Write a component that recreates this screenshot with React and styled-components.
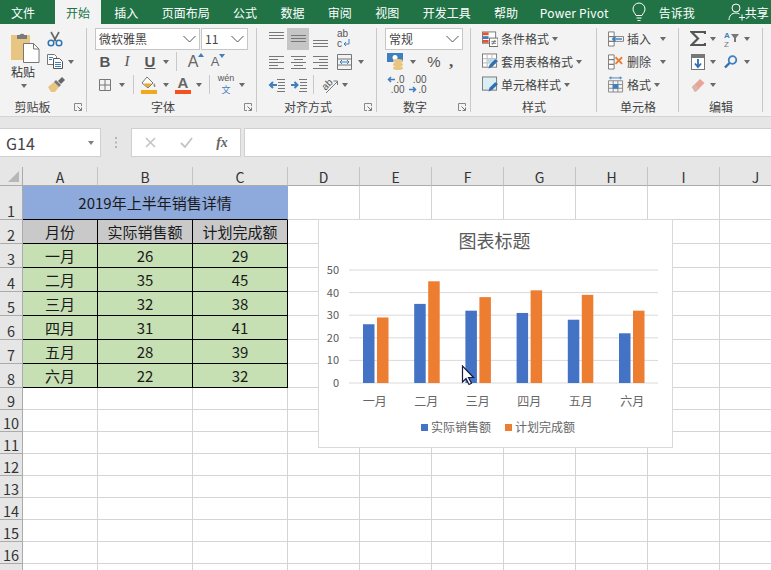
import React from 'react'
import styled, { createGlobalStyle } from 'styled-components'

const GlobalStyle = createGlobalStyle`
  html, body { margin: 0; padding: 0; background: #fff; }
  body { font-family: "Noto Sans CJK SC", "Noto Sans", sans-serif; }
`

const App_ = styled.div`
  position: relative;
  width: 771px;
  height: 570px;
  overflow: hidden;
  font-family: "Noto Sans CJK SC", "Noto Sans", sans-serif;
`

/* ---------- title tabs ---------- */
const TabBar = styled.div`
  display: flex;
  align-items: stretch;
  height: 24px;
  background: #217346;
  color: #fff;
  font-size: 12px;
`
const Tab = styled.div`
  display: flex;
  align-items: center;
  padding: 0 11px;
  margin: 0 0.7px;
  white-space: nowrap;
  background: ${p => (p.$active ? '#f3f3f3' : 'transparent')};
  color: ${p => (p.$active ? '#217346' : '#fff')};
  &:first-child { margin: 0 8.3px 0 0; }
  &:nth-child(2) { margin-right: 1.6px; }
`
const TabExtra = styled.div`
  display: flex;
  align-items: center;
  white-space: nowrap;
  flex: none;
  margin-left: ${p => p.$ml}px;
  letter-spacing: ${p => p.$ls || 0}px;
`

/* ---------- ribbon ---------- */
const Ribbon = styled.div`
  display: flex;
  height: 93px;
  box-sizing: border-box;
  padding-top: 3px;
  background: #f3f3f3;
  border-bottom: 1px solid #d4d4d4;
  color: #444;
  font-size: 12px;
`
const Group = styled.div`
  position: relative;
  width: ${p => p.$w}px;
  display: flex;
  flex-direction: column;
  &::after {
    content: '';
    position: absolute;
    top: 1px;
    bottom: 4px;
    right: 0;
    width: 1px;
    background: #c8c8c8;
  }
`
const Body = styled.div`
  height: 69px;
  padding-left: ${p => p.$pad || 0}px;
  display: flex;
`
const Rows = styled.div`
  display: flex;
  flex-direction: column;
`
const Row = styled.div`
  height: 23px;
  display: flex;
  align-items: center;
`
const Slot = styled.div`
  width: ${p => p.$w}px;
  height: 22px;
  flex: none;
  margin-left: ${p => p.$ml || 0}px;
  display: flex;
  align-items: center;
  justify-content: center;
  background: ${p => (p.$on ? '#c6c6c6' : 'transparent')};
`
const GroupLabel = styled.div`
  height: 21px;
  line-height: 22px;
  text-align: center;
  padding-right: ${p => p.$right || 0}px;
  color: #444;
  white-space: nowrap;
`
const Launcher = styled.svg`
  position: absolute;
  right: 5px;
  bottom: 5px;
`
const CaretBox = styled.div`
  width: ${p => p.$w || 10}px;
  height: 22px;
  flex: none;
  display: flex;
  align-items: center;
  justify-content: center;
  margin-left: ${p => p.$ml || 0}px;
  &::before {
    content: '';
    border-left: 3.5px solid transparent;
    border-right: 3.5px solid transparent;
    border-top: 4px solid #6a6a6a;
  }
`
const Sep = styled.div`
  width: 1px;
  height: 19px;
  flex: none;
  margin: 0 ${p => p.$m}px;
  background: #c8c8c8;
`
const Select = styled.div`
  width: ${p => p.$w}px;
  height: 22px;
  box-sizing: border-box;
  margin-right: 1px;
  flex: none;
  display: flex;
  align-items: center;
  justify-content: space-between;
  padding: 0 3px;
  background: #fff;
  border: 1px solid #c6c6c6;
  color: #444;
`
const PasteCol = styled.div`
  width: 47px;
  padding: 5px 0 0 11px;
  box-sizing: border-box;
  display: flex;
  flex-direction: column;
  align-items: flex-start;
  color: #333;
`
const PasteText = styled.div`
  line-height: 17px;
`
const PasteCaret = styled(CaretBox)`
  height: 8px;
  margin: 2px 0 0 8px;
`
const Fmt = styled.span`
  font-family: ${p => (p.$serif ? '"Liberation Serif"' : '"Liberation Sans"')}, sans-serif;
  font-size: 15px;
  font-weight: ${p => (p.$italic ? 400 : 700)};
  font-style: ${p => (p.$italic ? 'italic' : 'normal')};
  color: #555;
  text-decoration: ${p => (p.$under ? 'underline' : 'none')};
`
const GrowA = styled.span`
  position: relative;
  font-family: "Liberation Sans", sans-serif;
  font-size: ${p => p.$size}px;
  color: #666;
  &::after {
    content: '';
    position: absolute;
    top: 0;
    right: -6px;
    border-left: 3px solid transparent;
    border-right: 3px solid transparent;
    ${p => (p.$down ? 'border-top: 4px solid #3f7fbf;' : 'border-bottom: 4px solid #3f7fbf;')}
  }
`
const ColorA = styled.div`
  width: 17px;
  display: flex;
  flex-direction: column;
  align-items: center;
  font-family: "Liberation Sans", sans-serif;
  font-size: 15px;
  font-weight: 700;
  line-height: 14px;
  color: #666;
  &::after {
    content: '';
    width: 16px;
    height: 4px;
    background: #f4511e;
  }
`
const Wen = styled.div`
  display: flex;
  flex-direction: column;
  align-items: center;
  font-family: "Liberation Sans", sans-serif;
  font-size: 9px;
  line-height: 9px;
  color: #555;
  b {
    display: block;
    font-family: "Noto Sans CJK SC", sans-serif;
    font-weight: 400;
    font-size: 9px;
    line-height: 13px;
    color: #3f7fbf;
  }
`
const Percent = styled.span`
  font-family: "Liberation Sans", sans-serif;
  font-size: 15px;
  color: #555;
`
const Comma = styled.span`
  font-family: "Liberation Serif", serif;
  font-size: 17px;
  font-weight: 700;
  color: #555;
  line-height: 14px;
`
const Decimal = styled.div`
  display: flex;
  flex-direction: column;
  align-items: flex-end;
  font-family: "Liberation Sans", sans-serif;
  font-size: 10px;
  line-height: 10px;
  color: #555;
  span {
    display: flex;
    align-items: center;
    gap: 1px;
  }
`
const StyleText = styled.span`
  margin-left: 3px;
  white-space: nowrap;
`

/* ---------- formula bar ---------- */
const FormulaBar = styled.div`
  height: 50px;
  box-sizing: border-box;
  padding-top: 11px;
  display: flex;
  align-items: flex-start;
  background: #e6e6e6;
`
const NameBox = styled.div`
  width: 101px;
  height: 29px;
  box-sizing: border-box;
  display: flex;
  align-items: center;
  justify-content: space-between;
  padding: 0 6px;
  background: #fff;
  border: 1px solid #d0d0d0;
  border-left: 0;
  font-size: 16px;
  color: #444;
  &::after {
    content: '';
    border-left: 3.5px solid transparent;
    border-right: 3.5px solid transparent;
    border-top: 4px solid #808080;
  }
`
const Dots = styled.div`
  width: 30px;
  height: 29px;
  display: flex;
  align-items: center;
  justify-content: center;
`
const FxBox = styled.div`
  width: 110px;
  height: 29px;
  box-sizing: border-box;
  display: flex;
  align-items: center;
  background: #fff;
  border: 1px solid #d0d0d0;
`
const FxSlot = styled.div`
  width: 36px;
  display: flex;
  justify-content: center;
`
const FxText = styled.span`
  font-family: "Liberation Serif", serif;
  font-style: italic;
  font-weight: 700;
  font-size: 14px;
  color: #666;
`
const FormulaInput = styled.div`
  flex: 1;
  height: 29px;
  box-sizing: border-box;
  margin-left: 3px;
  background: #fff;
  border: 1px solid #d0d0d0;
  border-right: 0;
`

/* ---------- sheet ---------- */
const Sheet = styled.div`
  display: flex;
  flex-direction: column;
  font-size: 15px;
  color: #1a1a1a;
`
const SheetRow = styled.div`
  display: flex;
  height: ${p => p.$h}px;
  flex: none;
`
const Corner = styled.div`
  position: relative;
  width: 23px;
  flex: none;
  box-sizing: border-box;
  background: #e6e6e6;
  border-right: 1px solid #ababab;
  border-bottom: 1px solid #ababab;
  &::after {
    content: '';
    position: absolute;
    right: 3px;
    bottom: 3px;
    border-left: 11px solid transparent;
    border-bottom: 11px solid #b7b7b7;
  }
`
const ColHead = styled.div`
  width: ${p => p.$w}px;
  flex: none;
  box-sizing: border-box;
  display: flex;
  align-items: center;
  justify-content: center;
  padding-top: 2px;
  background: #e6e6e6;
  border-right: 1px solid #c4c4c4;
  border-bottom: 1px solid #ababab;
  color: #333;
  font-size: 14px;
`
const RowHead = styled.div`
  width: 23px;
  flex: none;
  box-sizing: border-box;
  display: flex;
  align-items: flex-end;
  justify-content: center;
  line-height: 16px;
  background: #e6e6e6;
  border-right: 1px solid #ababab;
  border-bottom: 1px solid #ababab;
  color: #333;
  font-size: 14.5px;
`
const fills = { title: '#8ea9db', head: '#c9c9c9', data: '#c6e0b4' }
const Cell = styled.div`
  width: ${p => p.$w}px;
  flex: none;
  box-sizing: border-box;
  display: flex;
  align-items: center;
  justify-content: center;
  background: ${p => fills[p.$fill] || '#fff'};
  border-right: 1px solid ${p => (p.$fill === 'title' ? '#8ea9db' : p.$fill ? '#000' : '#d4d4d4')};
  border-bottom: 1px solid ${p => (p.$fill ? '#000' : '#d4d4d4')};
  white-space: nowrap;
`

/* ---------- chart ---------- */
const Chart = styled.div`
  position: absolute;
  left: 318px;
  top: 219px;
  width: 355px;
  height: 229px;
  box-sizing: border-box;
  background: #fff;
  border: 1px solid #d9d9d9;
  display: flex;
  flex-direction: column;
  color: #595959;
`
const ChartTitle = styled.div`
  font-size: 18px;
  line-height: 24px;
  margin-top: 8px;
  text-align: center;
  padding-right: 2px;
`
const Plot = styled.svg`
  display: block;
  margin-top: 6px;
  flex: none;
`
const Cats = styled.div`
  display: flex;
  margin: 1px 0 0 30px;
  font-size: 12px;
  line-height: 16px;
`
const Cat = styled.div`
  width: 51.5px;
  text-align: center;
  color: #666;
`
const Legend = styled.div`
  display: flex;
  margin: 10px 0 0 102px;
  gap: 14px;
  font-size: 12px;
  line-height: 16px;
  color: #666;
`
const LegendItem = styled.div`
  display: flex;
  align-items: center;
  gap: 3px;
  &::before {
    content: '';
    width: 7px;
    height: 7px;
    background: ${p => p.$color};
  }
`
const Pointer = styled.svg`
  position: absolute;
  left: 461px;
  top: 365px;
`

/* ---------- icons ---------- */
const BLUE = '#3f7fbf'

const PasteIcon = () => (
  <svg width="29" height="31" viewBox="0 0 29 31">
    <rect x="0" y="3" width="19" height="25" fill="#e8c581" />
    <path d="M6 3h2.5a3 3 0 0 1 5 0H16v4H6z" fill="#7a7a7a" />
    <path d="M12.5 11.5h10l5.500 5.500v13.500h-15.500z" fill="#fff" stroke="#777" />
    <path d="M22.5 11.5v5.500H28" fill="none" stroke="#777" />
  </svg>
)
const CutIcon = () => (
  <svg width="16" height="16" viewBox="0 0 16 16">
    <path d="M4 1l5 9M12 1L7 10" stroke="#666" strokeWidth="1.6" fill="none" />
    <circle cx="4" cy="12" r="2.8" fill="none" stroke="#2f75b5" strokeWidth="1.5" />
    <circle cx="12" cy="12" r="2.8" fill="none" stroke="#2f75b5" strokeWidth="1.5" />
  </svg>
)
const CopyIcon = () => (
  <svg width="16" height="15" viewBox="0 0 16 15">
    <path d="M.5.5h7l2 2v8h-9z" fill="#fff" stroke="#777" />
    <path d="M6.5 4.5h6l3 3v7h-9z" fill="#fff" stroke="#555" />
    <path d="M2 3.5h4M2 5.5h3M8 8.5h6M8 10.5h6M8 12.5h6" stroke="#3f7fbf" />
  </svg>
)
const BrushIcon = () => (
  <svg width="18" height="15" viewBox="0 0 18 15">
    <path d="M1 10l6-5 5 5-4 5H4z" fill="#e8c581" />
    <path d="M7 5l5 5 2-2-5-5z" fill="#777" />
    <path d="M11 4l4-4 3 3-4 4z" fill="#666" />
  </svg>
)
const GridIcon = () => (
  <svg width="14" height="14" viewBox="0 0 14 14">
    <path d="M1.5 1.5h11v11h-11zM7 1.5v11M1.5 7h11" fill="none" stroke="#777" />
  </svg>
)
const FillIcon = () => (
  <svg width="18" height="18" viewBox="0 0 18 18">
    <path d="M7 1l6 6-5 5-6-5z" fill="#fff" stroke="#777" />
    <path d="M3.5 7.5H12L8 11.5z" fill="#f0a81c" />
    <path d="M14 7c1 1.5 2 3 1 4-1 .5-2-1-1-4z" fill="#888" />
    <rect x="1" y="14" width="16" height="4" fill="#f0a81c" />
  </svg>
)
const Lines = ({ w = 15, h = 16, rows }) => (
  <svg width={w} height={h} viewBox={`0 0 ${w} ${h}`}>
    {rows.map(([x1, x2, y], i) => (
      <path key={i} d={`M${x1} ${y + 0.5}H${x2}`} stroke="#777" />
    ))}
  </svg>
)
const full = [0, 15]
const alignTop = [[...full, 1], [...full, 4], [...full, 7]]
const alignMid = [[...full, 4], [...full, 7], [...full, 10]]
const alignBot = [[...full, 9], [...full, 12], [...full, 15]]
const alignLeft = [[0, 15, 2], [0, 9, 5], [0, 15, 8], [0, 9, 11], [0, 15, 14]]
const alignCenter = [[0, 15, 2], [3, 12, 5], [0, 15, 8], [3, 12, 11], [0, 15, 14]]
const alignRight = [[0, 15, 2], [6, 15, 5], [0, 15, 8], [6, 15, 11], [0, 15, 14]]

const WrapIcon = () => (
  <svg width="15" height="19" viewBox="0 0 15 19">
    <text x="0" y="8" fontSize="10" fontFamily="Liberation Sans" fill="#555">ab</text>
    <text x="0" y="18" fontSize="10" fontFamily="Liberation Sans" fill="#555">c</text>
    <path d="M12 10v5H7M9 13l-2 2 2 2" fill="none" stroke={BLUE} />
  </svg>
)
const MergeIcon = () => (
  <svg width="15" height="16" viewBox="0 0 15 16">
    <path d="M.5.5h14v15H.5zM.5 5h14M.5 11h14" fill="none" stroke="#777" />
    <path d="M3 8h9M5 6L3 8l2 2M10 6l2 2-2 2" fill="none" stroke={BLUE} />
  </svg>
)
const IndentIcon = ({ flip }) => (
  <svg width="17" height="14" viewBox="0 0 17 14">
    {flip ? (
      <path d="M1 7h6M4.5 4l3 3-3 3" fill="none" stroke={BLUE} strokeWidth="2" />
    ) : (
      <path d="M9 7H2M5 4L2 7l3 3" fill="none" stroke={BLUE} strokeWidth="2" />
    )}
    <path d="M9 1.5h8M10 4.5h7M10 7.5h7M10 10.5h7M9 13.5h8" stroke="#777" />
  </svg>
)
const RotateIcon = () => (
  <svg width="20" height="20" viewBox="0 0 20 20">
    <text x="3" y="13" fontSize="10" fontFamily="Liberation Sans" fill="#555" transform="rotate(-45 8 10)">ab</text>
    <path d="M7 18L18 7M14.5 6h4v4" fill="none" stroke="#777" />
  </svg>
)
const MoneyIcon = () => (
  <svg width="18" height="17" viewBox="0 0 18 17">
    <rect x="0" y="0" width="16" height="9" fill="#3f7fbf" />
    <circle cx="8" cy="4.5" r="2.5" fill="#fff" />
    <ellipse cx="11" cy="8" rx="5" ry="2" fill="#e8c581" />
    <ellipse cx="11" cy="11.5" rx="5" ry="2" fill="#e8c581" />
    <ellipse cx="11" cy="15" rx="5" ry="2" fill="#e8c581" />
  </svg>
)
const ArrowLeft = () => (
  <svg width="8" height="7" viewBox="0 0 8 7">
    <path d="M8 3.5H1.500M4 1L1.500 3.500 4 6" fill="none" stroke={BLUE} strokeWidth="1.500" />
  </svg>
)
const ArrowRight = () => (
  <svg width="8" height="7" viewBox="0 0 8 7">
    <path d="M0 3.500h6.500M4 1l2.500 2.500L4 6" fill="none" stroke={BLUE} strokeWidth="1.500" />
  </svg>
)
const CondIcon = () => (
  <svg width="17" height="16" viewBox="0 0 17 16">
    <rect x=".5" y=".5" width="14" height="12" fill="#fff" stroke="#777" />
    <rect x="1" y="1" width="6" height="3" fill="#e8502a" />
    <rect x="1" y="5" width="6" height="3" fill="#3f7fbf" />
    <rect x="1" y="9" width="6" height="3" fill="#e8502a" />
    <rect x="8" y="7" width="9" height="9" fill="#fff" stroke="#666" />
    <path d="M10 10.5h5M10 12.5h5M14 9l-3 5" fill="none" stroke="#555" strokeWidth=".8" />
  </svg>
)
const TableIcon = ({ plain }) => (
  <svg width="17" height="17" viewBox="0 0 17 17">
    <rect x=".5" y=".5" width="15" height="14" fill={plain ? '#dbeef3' : '#fff'} stroke="#777" />
    {!plain && <path d="M5.5 1v13M10.5 1v13M1 5.5h14M1 10h14" stroke="#b5b5b5" />}
    {!plain && <path d="M5.5 5.5h10v5h-10z" fill="#bcd9e2" />}
    <path d="M7 16l1-4 6-6 3 2-6 6z" fill="#2f6fb0" />
  </svg>
)
const InsertIcon = () => (
  <svg width="17" height="17" viewBox="0 0 17 17">
    <path d="M.5 1.5h6v5h-6zM.5 6.5h6v5h-6zM.5 11.5h6v5h-6zM6.5 6.5h10v5h-10z" fill="#fff" stroke="#777" />
    <path d="M15 9H5M8 6.5L5 9l3 2.5" fill="none" stroke={BLUE} strokeWidth="1.6" />
  </svg>
)
const DeleteIcon = () => (
  <svg width="17" height="17" viewBox="0 0 17 17">
    <path d="M.5 1.5h6v5h-6zM.5 6.5h6v5h-6zM.5 11.5h6v5h-6z" fill="#fff" stroke="#777" />
    <path d="M8 4l7 7M15 4l-7 7" stroke="#ed7d31" strokeWidth="2" />
  </svg>
)
const FormatIcon = () => (
  <svg width="17" height="17" viewBox="0 0 17 17">
    <path d="M.5 4.5h15v12H.5zM5.5 4.5v12M10.5 4.5v12M.5 8.5h15M.5 12.5h15" fill="none" stroke="#888" />
    <rect x="5" y="8" width="6" height="5" fill="#3f7fbf" />
    <path d="M1 1.5h14M3 0v3M13 0v3" stroke={BLUE} />
  </svg>
)
const SumIcon = () => (
  <svg width="16" height="15" viewBox="0 0 16 15">
    <path d="M15 3V1H1.5L8 7.5 1.5 14H15v-2" fill="none" stroke="#555" strokeWidth="2.2" />
  </svg>
)
const SortIcon = () => (
  <svg width="15" height="20" viewBox="0 0 15 20">
    <text x="0" y="9" fontSize="8" fontWeight="700" fontFamily="Liberation Sans" fill={BLUE}>A</text>
    <text x="0" y="18" fontSize="8" fontFamily="Liberation Sans" fill="#777">Z</text>
    <path d="M7 5h8l-3 4v4h-2V9z" fill="#777" />
  </svg>
)
const FillDownIcon = () => (
  <svg width="14" height="16" viewBox="0 0 14 16">
    <rect x=".5" y=".5" width="13" height="15" fill="#fff" stroke="#777" />
    <rect x="1" y="1" width="12" height="3" fill="#777" />
    <path d="M7 5v8M4 9.5L7 13l3-3.5" fill="none" stroke="#2f6fb0" strokeWidth="1.8" />
  </svg>
)
const FindIcon = () => (
  <svg width="14" height="14" viewBox="0 0 14 14">
    <circle cx="8.5" cy="5" r="3.8" fill="none" stroke={BLUE} strokeWidth="1.8" />
    <path d="M5.5 8L1 12.5" stroke="#2f6fb0" strokeWidth="2.4" />
  </svg>
)
const EraserIcon = () => (
  <svg width="14" height="14" viewBox="0 0 14 14">
    <path d="M1 9l8-8 4.5 4L5 13.5H3.5z" fill="#eba394" />
    <path d="M1 9l3-3 4.5 4.5L5 13.5H3.5z" fill="#d8b7a8" />
  </svg>
)
const BulbIcon = () => (
  <svg width="14" height="20" viewBox="0 0 14 20">
    <path d="M4 13.5C3 11 1 10 1 7a6 6 0 0 1 12 0c0 3-2 4-3 6.5zM4.5 16h5M5.5 18.5h3" fill="none" stroke="#fff" />
  </svg>
)
const UserIcon = () => (
  <svg width="17" height="18" viewBox="0 0 17 18">
    <circle cx="8" cy="5" r="4" fill="none" stroke="#fff" />
    <path d="M1 17c0-4 2.5-7 7-7 1.500 0 2.500.3 3.500 1M11 14.500h6M14 11.500v6" fill="none" stroke="#fff" />
  </svg>
)
const Chevron = () => (
  <svg width="13" height="8" viewBox="0 0 13 8">
    <path d="M.5 1l6 6 6-6" fill="none" stroke="#555" />
  </svg>
)
const LauncherIcon = () => (
  <Launcher width="8" height="8" viewBox="0 0 8 8">
    <path d="M7.5 3V.5H.5v7H3" fill="none" stroke="#888" />
    <path d="M3.5 3.5L7 7M7.500 4.500v3h-3" fill="none" stroke="#777" />
  </Launcher>
)

/* ---------- data ---------- */
const months = [
  ['一月', 26, 29],
  ['二月', 35, 45],
  ['三月', 32, 38],
  ['四月', 31, 41],
  ['五月', 28, 39],
  ['六月', 22, 32],
]
const colWidths = [75, 95, 95, 72, 72, 72, 72, 72, 72, 72]
const colNames = 'ABCDEFGHIJ'.split('')
const rowHeight = r => (r === 1 ? 34 : r <= 8 ? 24 : 22)
const tabs = ['文件', '开始', '插入', '页面布局', '公式', '数据', '审阅', '视图', '开发工具', '帮助']

const rowCells = r => {
  if (r === 1) return [{ w: 265, fill: 'title', text: '2019年上半年销售详情' }, ...colWidths.slice(3).map(w => ({ w }))]
  if (r === 2) {
    return [
      { w: 75, fill: 'head', text: '月份' },
      { w: 95, fill: 'head', text: '实际销售额' },
      { w: 95, fill: 'head', text: '计划完成额' },
      ...colWidths.slice(3).map(w => ({ w })),
    ]
  }
  if (r <= 8) {
    const m = months[r - 3]
    return [...m.map((text, i) => ({ w: colWidths[i], fill: 'data', text })), ...colWidths.slice(3).map(w => ({ w }))]
  }
  return colWidths.map(w => ({ w }))
}

const PLOT_X = 30
const PLOT_W = 309
const ZERO_Y = 125
const UNIT = 2.26

const BarChart = () => (
  <Plot width="353" height="134" viewBox="0 0 353 134">
    {[0, 10, 20, 30, 40, 50].map(v => {
      const y = ZERO_Y - v * UNIT
      return (
        <g key={v}>
          <path d={`M${PLOT_X} ${y}H${PLOT_X + PLOT_W}`} stroke="#d9d9d9" strokeWidth="1" />
          <text x="20" y={y + 4} textAnchor="end" fontSize="11" fontFamily="Noto Sans CJK SC" fill="#595959">{v}</text>
        </g>
      )
    })}
    {months.map(([name, a, b], i) => {
      const x = PLOT_X + 14 + i * 51.2
      return (
        <g key={name}>
          <rect x={x} y={ZERO_Y - a * UNIT} width="11.5" height={a * UNIT} fill="#4472c4" />
          <rect x={x + 14} y={ZERO_Y - b * UNIT} width="11.5" height={b * UNIT} fill="#ed7d31" />
        </g>
      )
    })}
  </Plot>
)

export default function App() {
  return (
    <App_>
      <GlobalStyle />
      <TabBar>
        {tabs.map((t, i) => (
          <Tab key={t} $active={i === 1}>{t}</Tab>
        ))}
        <TabExtra $ml={10} $ls={0.2}>Power Pivot</TabExtra>
        <TabExtra $ml={23}><BulbIcon /></TabExtra>
        <TabExtra $ml={13}>告诉我</TabExtra>
        <TabExtra $ml={33}><UserIcon /></TabExtra>
        <TabExtra $ml={0}>共享</TabExtra>
      </TabBar>

      <Ribbon>
        <Group $w={87}>
          <Body>
            <PasteCol>
              <PasteIcon />
              <PasteText>粘贴</PasteText>
              <PasteCaret />
            </PasteCol>
            <Rows>
              <Row><Slot $w={16}><CutIcon /></Slot></Row>
              <Row><Slot $w={16}><CopyIcon /></Slot><CaretBox $ml={3} /></Row>
              <Row><Slot $w={18}><BrushIcon /></Slot></Row>
            </Rows>
          </Body>
          <GroupLabel $right={22}>剪贴板</GroupLabel>
          <LauncherIcon />
        </Group>

        <Group $w={170}>
          <Body $pad={8}>
            <Rows>
              <Row>
                <Select $w={105}>微软雅黑<Chevron /></Select>
                <Select $w={47}>11<Chevron /></Select>
              </Row>
              <Row>
                <Slot $w={20}><Fmt>B</Fmt></Slot>
                <Slot $w={24}><Fmt $italic $serif>I</Fmt></Slot>
                <Slot $w={22}><Fmt $under>U</Fmt></Slot>
                <CaretBox />
                <Sep $m={5} />
                <Slot $w={22}><GrowA $size={16}>A</GrowA></Slot>
                <Slot $w={22}><GrowA $size={13} $down>A</GrowA></Slot>
              </Row>
              <Row>
                <Slot $w={20}><GridIcon /></Slot>
                <CaretBox $w={14} />
                <Sep $m={4} />
                <Slot $w={22}><FillIcon /></Slot>
                <CaretBox $w={12} />
                <Slot $w={22}><ColorA>A</ColorA></Slot>
                <CaretBox />
                <Sep $m={5} />
                <Slot $w={22}><Wen>wén<b>文</b></Wen></Slot>
                <CaretBox />
              </Row>
            </Rows>
          </Body>
          <GroupLabel $right={18}>字体</GroupLabel>
          <LauncherIcon />
        </Group>

        <Group $w={120}>
          <Body $pad={8}>
            <Rows>
              <Row>
                <Slot $w={22}><Lines rows={alignTop} /></Slot>
                <Slot $w={22} $on><Lines rows={alignMid} /></Slot>
                <Slot $w={22}><Lines rows={alignBot} /></Slot>
                <Slot $w={22} $ml={2}><WrapIcon /></Slot>
              </Row>
              <Row>
                <Slot $w={22}><Lines rows={alignLeft} /></Slot>
                <Slot $w={22}><Lines rows={alignCenter} /></Slot>
                <Slot $w={22}><Lines rows={alignRight} /></Slot>
                <Slot $w={22} $ml={2}><MergeIcon /></Slot>
                <CaretBox $w={12} />
              </Row>
              <Row>
                <Slot $w={22}><IndentIcon /></Slot>
                <Slot $w={22}><IndentIcon flip /></Slot>
                <Sep $m={4} />
                <Slot $w={22}><RotateIcon /></Slot>
                <CaretBox />
              </Row>
            </Rows>
          </Body>
          <GroupLabel $right={18}>对齐方式</GroupLabel>
          <LauncherIcon />
        </Group>

        <Group $w={94}>
          <Body $pad={8}>
            <Rows>
              <Row><Select $w={78}>常规<Chevron /></Select></Row>
              <Row>
                <Slot $w={22}><MoneyIcon /></Slot>
                <CaretBox $w={12} />
                <Slot $w={22} $ml={4}><Percent>%</Percent></Slot>
                <Slot $w={12}><Comma>,</Comma></Slot>
              </Row>
              <Row>
                <Slot $w={22}><Decimal><span><ArrowLeft />.0</span><span>.00</span></Decimal></Slot>
                <Slot $w={22}><Decimal><span>.00</span><span><ArrowRight />.0</span></Decimal></Slot>
              </Row>
            </Rows>
          </Body>
          <GroupLabel $right={18}>数字</GroupLabel>
          <LauncherIcon />
        </Group>

        <Group $w={126}>
          <Body $pad={11}>
            <Rows>
              <Row><Slot $w={16}><CondIcon /></Slot><StyleText>条件格式</StyleText><CaretBox $w={12} /></Row>
              <Row><Slot $w={16}><TableIcon /></Slot><StyleText>套用表格格式</StyleText><CaretBox $w={12} /></Row>
              <Row><Slot $w={16}><TableIcon plain /></Slot><StyleText>单元格样式</StyleText><CaretBox $w={12} /></Row>
            </Rows>
          </Body>
          <GroupLabel>样式</GroupLabel>
        </Group>

        <Group $w={82}>
          <Body $pad={11}>
            <Rows>
              <Row><Slot $w={16}><InsertIcon /></Slot><StyleText>插入</StyleText><CaretBox $w={12} $ml={6} /></Row>
              <Row><Slot $w={16}><DeleteIcon /></Slot><StyleText>删除</StyleText><CaretBox $w={12} $ml={6} /></Row>
              <Row><Slot $w={16}><FormatIcon /></Slot><StyleText>格式</StyleText><CaretBox $w={12} /></Row>
            </Rows>
          </Body>
          <GroupLabel>单元格</GroupLabel>
        </Group>

        <Group $w={84}>
          <Body $pad={9}>
            <Rows>
              <Row><Slot $w={20}><SumIcon /></Slot><CaretBox /><Slot $w={26}><SortIcon /></Slot><CaretBox $w={6} /></Row>
              <Row><Slot $w={20}><FillDownIcon /></Slot><CaretBox /><Slot $w={26}><FindIcon /></Slot><CaretBox $w={6} /></Row>
              <Row><Slot $w={20}><EraserIcon /></Slot><CaretBox /></Row>
            </Rows>
          </Body>
          <GroupLabel>编辑</GroupLabel>
        </Group>
      </Ribbon>

      <FormulaBar>
        <NameBox>G14</NameBox>
        <Dots>
          <svg width="3" height="11" viewBox="0 0 3 11">
            <path d="M0 0h2v2H0zM0 4.5h2v2H0zM0 9h2v2H0z" fill="#b5b5b5" />
          </svg>
        </Dots>
        <FxBox>
          <FxSlot>
            <svg width="11" height="11" viewBox="0 0 11 11">
              <path d="M1 1l9 9M10 1l-9 9" stroke="#c4c4c4" strokeWidth="1.6" />
            </svg>
          </FxSlot>
          <FxSlot>
            <svg width="13" height="11" viewBox="0 0 13 11">
              <path d="M1 6l4 4 7-9" fill="none" stroke="#c4c4c4" strokeWidth="1.8" />
            </svg>
          </FxSlot>
          <FxSlot><FxText>fx</FxText></FxSlot>
        </FxBox>
        <FormulaInput />
      </FormulaBar>

      <Sheet>
        <SheetRow $h={19}>
          <Corner />
          {colNames.map((c, i) => (
            <ColHead key={c} $w={colWidths[i]}>{c}</ColHead>
          ))}
        </SheetRow>
        {Array.from({ length: 17 }, (_, i) => i + 1).map(r => (
          <SheetRow key={r} $h={rowHeight(r)}>
            <RowHead>{r < 17 ? r : ''}</RowHead>
            {rowCells(r).map((c, i) => (
              <Cell key={i} $w={c.w} $fill={c.fill}>{c.text}</Cell>
            ))}
          </SheetRow>
        ))}
      </Sheet>

      <Chart>
        <ChartTitle>图表标题</ChartTitle>
        <BarChart />
        <Cats>
          {months.map(([name]) => (
            <Cat key={name}>{name}</Cat>
          ))}
        </Cats>
        <Legend>
          <LegendItem $color="#4472c4">实际销售额</LegendItem>
          <LegendItem $color="#ed7d31">计划完成额</LegendItem>
        </Legend>
      </Chart>

      <Pointer width="14" height="21" viewBox="0 0 14 21">
        <path d="M1.5 1v16L5 13.5l3 6 2.500-1.200-3-5.800h5z" fill="#fff" stroke="#1a1a3a" strokeWidth="1.2" />
      </Pointer>
    </App_>
  )
}
